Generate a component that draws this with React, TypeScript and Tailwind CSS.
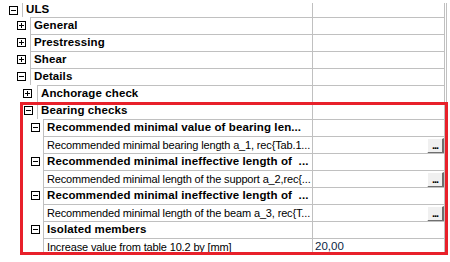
import React from "react";

type Row = {
  label: string;
  bold?: boolean;
  box?: "plus" | "minus";
  w: string;
  pl: string;
  value?: string;
  button?: boolean;
  first?: boolean;
};

const rows: Row[] = [
  { label: "ULS", bold: true, box: "minus", w: "w-[22px]", pl: "pl-[9px]", first: true },
  { label: "General", bold: true, box: "plus", w: "w-[30px]", pl: "pl-[17px]" },
  { label: "Prestressing", bold: true, box: "plus", w: "w-[30px]", pl: "pl-[17px]" },
  { label: "Shear", bold: true, box: "plus", w: "w-[30px]", pl: "pl-[17px]" },
  { label: "Details", bold: true, box: "minus", w: "w-[30px]", pl: "pl-[17px]" },
  { label: "Anchorage check", bold: true, box: "plus", w: "w-[37px]", pl: "pl-[23px]" },
  { label: "Bearing checks", bold: true, box: "minus", w: "w-[37px]", pl: "pl-[24px]" },
  { label: "Recommended minimal value of bearing len...", bold: true, box: "minus", w: "w-[43px]", pl: "pl-[31px]" },
  { label: "Recommended minimal bearing length a_1, rec{Tab.1...", w: "w-[43px]", pl: "pl-[31px]", button: true },
  { label: "Recommended minimal ineffective length of  ...", bold: true, box: "minus", w: "w-[43px]", pl: "pl-[31px]" },
  { label: "Recommended minimal length of the support a_2,rec{...", w: "w-[43px]", pl: "pl-[31px]", button: true },
  { label: "Recommended minimal ineffective length of  ...", bold: true, box: "minus", w: "w-[43px]", pl: "pl-[31px]" },
  { label: "Recommended minimal length of the beam a_3, rec{T...", w: "w-[43px]", pl: "pl-[31px]", button: true },
  { label: "Isolated members", bold: true, box: "minus", w: "w-[43px]", pl: "pl-[31px]" },
  { label: "Increase value from table 10.2 by [mm]", w: "w-[43px]", pl: "pl-[31px]", value: "20,00" },
];

function Box({ kind }: { kind: "plus" | "minus" }) {
  return (
    <svg width="9" height="9" viewBox="0 0 9 9" shapeRendering="crispEdges" className="block">
      <rect x="0.5" y="0.5" width="8" height="8" fill="#fff" stroke="#000" strokeWidth="1" />
      <line x1="2" y1="4.5" x2="7" y2="4.5" stroke="#000" strokeWidth="1" />
      {kind === "plus" && <line x1="4.5" y1="2" x2="4.5" y2="7" stroke="#000" strokeWidth="1" />}
    </svg>
  );
}

function DotsButton() {
  return (
    <div className="h-[16px] w-[17px] mt-[1px] bg-[#f0f0f0] border-r-2 border-b-2 border-r-[#6f6f6f] border-b-[#6f6f6f] border-t border-l border-t-white border-l-white flex items-end justify-center">
      <span className="text-[11px] leading-[11px] font-bold text-black tracking-[-1px] pb-[1px]">...</span>
    </div>
  );
}

function GridRow({ r }: { r: Row }) {
  return (
    <div className="flex h-[17px]">
      <div className={`${r.w} shrink-0 flex items-center ${r.pl} ${r.first ? "pt-[3px]" : ""}`}>
        {r.box && <Box kind={r.box} />}
      </div>
      <div
        className={`flex-1 min-w-0 flex border-l border-[#c0c0c0] ${r.first ? "mt-[3px]" : "border-t"}`}
      >
        <div
          className={`flex-1 min-w-0 pl-[3px] flex items-center whitespace-pre overflow-hidden text-black ${
            r.bold ? "font-bold text-[11.5px] tracking-[0.1px]" : "text-[11px] tracking-[-0.15px]"
          }`}
        >
          {r.label}
        </div>
        <div className="w-[132px] shrink-0 border-l border-[#c0c0c0] flex items-center justify-between text-[11.5px] text-[#0b1f44]">
          <span className="pl-[2px]">{r.value ?? ""}</span>
          {r.button && <DotsButton />}
        </div>
      </div>
    </div>
  );
}

export default function App() {
  return (
    <div
      className="relative w-[450px] h-[262px] bg-white overflow-hidden"
      style={{ fontFamily: '"Liberation Sans", Arial, sans-serif' }}
    >
      <div className="flex">
        <div className="w-[444px] shrink-0 flex flex-col">
          {rows.map((r, i) => (
            <GridRow key={i} r={r} />
          ))}
        </div>
        <div className="w-px bg-[#c0c0c0] mt-[3px]" />
        <div className="w-px" />
        <div className="w-px bg-[#c0c0c0] mt-[3px]" />
      </div>
      <div className="absolute left-[20px] top-[102px] w-[428px] h-[153px] border-[3px] border-[#e8202a]" />
    </div>
  );
}
